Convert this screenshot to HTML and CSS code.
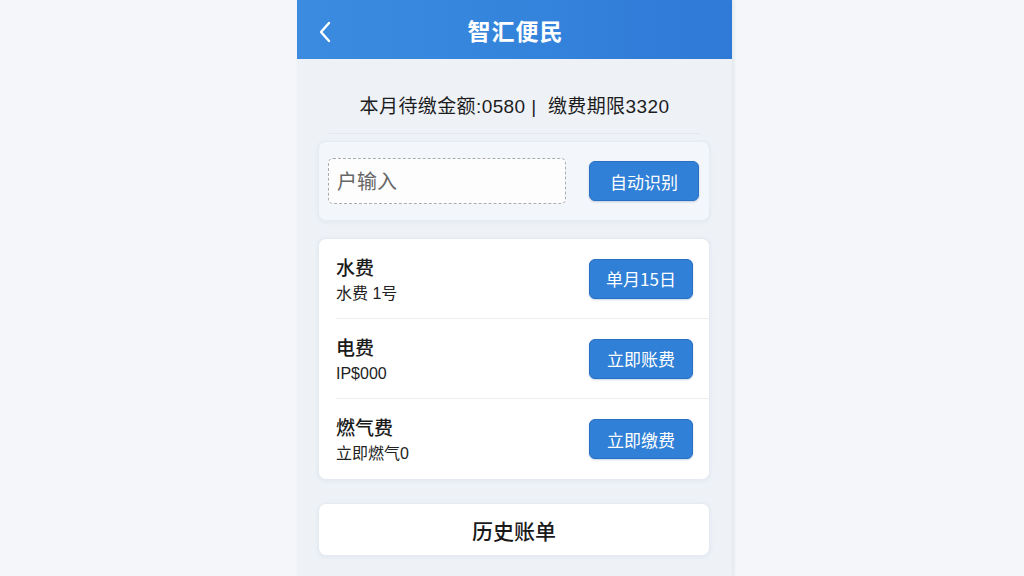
FILE: index.html
```html
<!DOCTYPE html>
<html lang="zh-CN">
<head>
<meta charset="utf-8">
<title>智汇便民</title>
<link rel="stylesheet" href="styles.css">
</head>
<body>
<div class="phone">
  <header class="topbar">
    <svg class="back" width="16" height="24" viewBox="0 0 16 24"><polyline points="12,3 4,12 12,21" fill="none" stroke="#fff" stroke-width="2.4" stroke-linecap="round" stroke-linejoin="round"/></svg>
    <h1 class="title">智汇便民</h1>
  </header>
  <div class="summary">本月待缴金额:0580 | &nbsp;缴费期限3320</div>
  <div class="content">
    <section class="card identify">
      <div class="input">户输入</div>
      <button class="btn btn-id">自动识别</button>
    </section>
    <section class="card list">
      <div class="row">
        <div class="info"><div class="name">水费</div><div class="sub">水费 1号</div></div>
        <button class="btn">单月15日</button>
      </div>
      <div class="row">
        <div class="info"><div class="name">电费</div><div class="sub">IP$000</div></div>
        <button class="btn">立即账费</button>
      </div>
      <div class="row">
        <div class="info"><div class="name">燃气费</div><div class="sub">立即燃气0</div></div>
        <button class="btn">立即缴费</button>
      </div>
    </section>
    <section class="card history">历史账单</section>
  </div>
</div>
</body>
</html>
```

FILE: styles.css
```css
* { box-sizing: border-box; }
html, body { margin: 0; padding: 0; }
body {
  background: #f4f6f9;
  font-family: "Noto Sans CJK SC", "Noto Sans", sans-serif;
  color: #1b1b1b;
  width: 1024px;
  height: 576px;
  overflow: hidden;
}
.phone {
  margin-left: 297px;
  width: 435px;
  height: 576px;
  background: #eef2f7;
  box-shadow: 2px 0 3px rgba(150, 165, 185, 0.18);
  display: flex;
  flex-direction: column;
}
.topbar {
  height: 59px;
  background: linear-gradient(90deg, #3b8ce0 0%, #3484dc 50%, #2f79d7 100%);
  display: flex;
  align-items: center;
  justify-content: center;
  position: relative;
}
.back { position: absolute; left: 20px; top: 20px; }
.title {
  margin: 0;
  color: #fff;
  font-size: 23px;
  font-weight: 700;
  letter-spacing: 1px;
  padding-left: 2px;
}
.summary {
  margin: 0 32px;
  padding-top: 35px;
  height: 75px;
  text-align: center;
  font-family: "Liberation Sans", "Noto Sans CJK SC", sans-serif;
  font-size: 19px;
  line-height: 26px;
  letter-spacing: 0.4px;
  color: #1d1d1d;
  border-bottom: 1px solid #e3e8ee;
}
.content {
  padding: 7px 22px 0 21px;
  display: flex;
  flex-direction: column;
}
.card {
  border-radius: 8px;
  background: #fff;
  border: 1px solid #e6ebf1;
  box-shadow: 0 1px 4px rgba(140, 160, 185, 0.15);
}
.identify {
  height: 80px;
  background: #f3f6fa;
  display: flex;
  align-items: center;
  justify-content: space-between;
  padding: 0 10px 0 9px;
}
.input {
  width: 238px;
  height: 46px;
  border: 1px dashed #a9adb3;
  border-radius: 5px;
  background: #fdfdfd;
  color: #666;
  font-size: 20px;
  line-height: 44px;
  padding-left: 8px;
}
.btn {
  font-family: inherit;
  border: 1px solid #2a6fc2;
  background: #2f80d6;
  color: #fff;
  border-radius: 6px;
  width: 104px;
  height: 40px;
  font-size: 17px;
  padding: 0;
  box-shadow: 0 1px 2px rgba(40, 90, 160, 0.25);
}
.btn-id { width: 110px; height: 40px; }
.list {
  margin-top: 17px;
  padding: 0 16px 0 17px;
}
.row {
  height: 80px;
  display: flex;
  align-items: center;
  justify-content: space-between;
  border-bottom: 1px solid #ebeef2;
  margin-right: -16px;
  padding-right: 16px;
}
.row:last-child { border-bottom: none; }
.info { padding-top: 3px; }
.name {
  font-size: 19px;
  line-height: 25px;
  font-weight: 500;
  color: #1a1a1a;
}
.sub {
  font-family: "Liberation Sans", "Noto Sans CJK SC", sans-serif;
  font-size: 16px;
  line-height: 26px;
  margin-top: 2px;
  color: #222;
}
.history {
  margin-top: 23px;
  height: 53px;
  display: flex;
  align-items: center;
  justify-content: center;
  font-size: 21px;
  font-weight: 500;
  color: #1a1a1a;
}
```
